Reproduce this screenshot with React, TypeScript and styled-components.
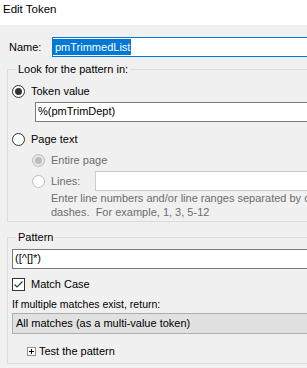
import React from "react";
import styled, { createGlobalStyle } from "styled-components";

const Global = createGlobalStyle`
  html, body { margin: 0; padding: 0; background: #f0f0f0; }
  body { font-family: "Liberation Sans", Arial, sans-serif; font-size: 11px; color: #000; }
`;

const Page = styled.div`
  width: 307px;
  height: 368px;
  overflow: hidden;
  background: #f0f0f0;
  display: flex;
  flex-direction: column;
`;

const TitleBar = styled.div`
  height: 25px;
  flex: none;
  background: #fff;
  padding: 2px 0 0 3px;
  box-sizing: border-box;
  font-size: 11.5px;
  line-height: 15px;
`;

const Body = styled.div`
  width: 380px;
  flex: none;
  padding: 12px 0 0 7px;
  display: flex;
  flex-direction: column;
`;

const NameRow = styled.div`
  display: flex;
  align-items: center;
`;

const NameLabel = styled.span`
  width: 43px;
  padding-left: 2px;
  line-height: 15px;
`;

const TextBox = styled.div<{ $tone?: "focus" | "normal" | "disabled"; $indent?: number }>`
  box-sizing: border-box;
  height: 20px;
  flex: 1;
  margin-left: ${(p) => p.$indent ?? 0}px;
  background: #fff;
  border: 1px solid
    ${(p) => (p.$tone === "focus" ? "#0078d7" : p.$tone === "disabled" ? "#cccccc" : "#7a7a7a")};
  padding: 1px 0 0 ${(p) => (p.$tone === "focus" ? 0 : 2)}px;
  line-height: 15px;
  white-space: nowrap;
`;

const Selected = styled.span`
  display: inline-block;
  background: #0078d7;
  color: #fff;
  padding: 0 1px 0 2px;
  line-height: 16px;
`;

const Group = styled.fieldset<{ $top: number; $height: number }>`
  margin: ${(p) => p.$top}px 0 0 0;
  height: ${(p) => p.$height}px;
  box-sizing: border-box;
  border: 1px solid #dcdcdc;
  padding: 0 0 0 4px;
  min-width: 0;
`;

const Legend = styled.legend`
  padding: 0 2px;
  margin-left: 4px;
  line-height: 15px;
`;

const Option = styled.label<{ $disabled?: boolean }>`
  display: flex;
  align-items: center;
  gap: 6px;
  height: 15px;
  color: ${(p) => (p.$disabled ? "#6d6d6d" : "#000")};
  line-height: 15px;
  white-space: nowrap;
`;

const Radio = styled.span<{ $checked?: boolean; $disabled?: boolean }>`
  box-sizing: border-box;
  width: 13px;
  height: 13px;
  flex: none;
  border-radius: 50%;
  border: 1px solid ${(p) => (p.$disabled ? "#bcbcbc" : "#333")};
  background: ${(p) => (p.$disabled && p.$checked ? "#e6e6e6" : "#fff")};
  display: flex;
  align-items: center;
  justify-content: center;
  &::after {
    content: "";
    display: ${(p) => (p.$checked ? "block" : "none")};
    width: 7px;
    height: 7px;
    border-radius: 50%;
    background: ${(p) => (p.$disabled ? "#bcbcbc" : "#333")};
  }
`;

const Check = styled.span`
  box-sizing: border-box;
  width: 13px;
  height: 13px;
  flex: none;
  border: 1px solid #333;
  background: #fff;
  display: flex;
  align-items: center;
  justify-content: center;
`;

const Row = styled.div<{ $top: number; $indent?: number }>`
  display: flex;
  align-items: center;
  margin-top: ${(p) => p.$top}px;
  margin-left: ${(p) => p.$indent ?? 0}px;
`;

const Help = styled.div`
  margin: 0 0 0 39px;
  color: #6d6d6d;
  line-height: 14px;
  white-space: nowrap;
`;

const Caption = styled.div<{ $top: number }>`
  margin-top: ${(p) => p.$top}px;
  line-height: 14px;
  font-size: 10.5px;
`;

const Combo = styled.div`
  box-sizing: border-box;
  margin-top: 2px;
  height: 21px;
  background: #e1e1e1;
  border: 1px solid #adadad;
  padding: 2px 0 0 3px;
  line-height: 15px;
  white-space: nowrap;
`;

const Expander = styled.div`
  display: flex;
  align-items: center;
  gap: 3px;
  margin: 10px 0 0 15px;
  line-height: 15px;
`;

const PlusBox = styled.span`
  box-sizing: border-box;
  width: 9px;
  height: 9px;
  border: 1px solid #919191;
  background: #fff;
  display: flex;
  align-items: center;
  justify-content: center;
`;

export default function App() {
  return (
    <>
      <Global />
      <Page>
        <TitleBar>Edit Token</TitleBar>
        <Body>
          <NameRow>
            <NameLabel>Name:</NameLabel>
            <TextBox $tone="focus">
              <Selected>pmTrimmedList</Selected>
            </TextBox>
          </NameRow>

          <Group $top={5} $height={160}>
            <Legend>Look for the pattern in:</Legend>
            <Row $top={7}>
              <Option>
                <Radio $checked />
                Token value
              </Option>
            </Row>
            <Row $top={3}>
              <TextBox $indent={23}>%(pmTrimDept)</TextBox>
            </Row>
            <Row $top={10}>
              <Option>
                <Radio />
                Page text
              </Option>
            </Row>
            <Row $top={6} $indent={20}>
              <Option $disabled>
                <Radio $checked $disabled />
                Entire page
              </Option>
            </Row>
            <Row $top={3} $indent={20}>
              <Option $disabled>
                <Radio $disabled />
                Lines:
              </Option>
              <TextBox $tone="disabled" $indent={15} />
            </Row>
            <Help>
              Enter line numbers and/or line ranges separated by commas or
              <br />
              dashes.&nbsp; For example, 1, 3, 5-12
            </Help>
          </Group>

          <Group $top={8} $height={134}>
            <Legend>Pattern</Legend>
            <Row $top={4}>
              <TextBox>([^[]*)</TextBox>
            </Row>
            <Row $top={8}>
              <Option>
                <Check>
                  <svg width="11" height="11" viewBox="0 0 11 11">
                    <path d="M1.5 5.5 L4 8 L9.5 2.5" fill="none" stroke="#333" strokeWidth="1.1" />
                  </svg>
                </Check>
                Match Case
              </Option>
            </Row>
            <Caption $top={5}>If multiple matches exist, return:</Caption>
            <Combo>All matches (as a multi-value token)</Combo>
            <Expander>
              <PlusBox>
                <svg width="7" height="7" viewBox="0 0 7 7">
                  <path d="M1 3.5 H6 M3.5 1 V6" stroke="#000" strokeWidth="1" />
                </svg>
              </PlusBox>
              Test the pattern
            </Expander>
          </Group>
        </Body>
      </Page>
    </>
  );
}
